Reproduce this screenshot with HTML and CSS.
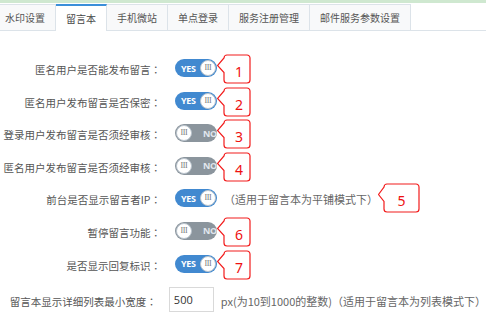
FILE: index.html
```html
<!DOCTYPE html>
<html>
<head>
  <title>留言本设置</title>
  <link rel="stylesheet" href="styles.css">
</head>
<body>
  <div class="topline"></div>

  <ul class="tabs">
    <li class="tab">水印设置</li>
    <li class="tab active">留言本</li>
    <li class="tab">手机微站</li>
    <li class="tab">单点登录</li>
    <li class="tab">服务注册管理</li>
    <li class="tab">邮件服务参数设置</li>
  </ul>

  <div class="form">
    <div class="row">
      <label class="label">匿名用户是否能发布留言<span class="colon">：</span></label>
      <div class="ctl">
        <span class="switch on"><span class="switch-text">YES</span><span class="knob">III</span></span>
        <span class="callout">
          <svg width="38" height="31" viewBox="0 0 38 31"><path d="M7 18.5V26a3 3 0 0 0 3 3h20a3 3 0 0 0 3-3V4a3 3 0 0 0-3-3H10a3 3 0 0 0-3 3L0.5 11.5Z"/></svg>
          <span class="callout-num">1</span>
        </span>
      </div>
    </div>

    <div class="row">
      <label class="label">匿名用户发布留言是否保密<span class="colon">：</span></label>
      <div class="ctl">
        <span class="switch on"><span class="switch-text">YES</span><span class="knob">III</span></span>
        <span class="callout">
          <svg width="38" height="31" viewBox="0 0 38 31"><path d="M7 18.5V26a3 3 0 0 0 3 3h20a3 3 0 0 0 3-3V4a3 3 0 0 0-3-3H10a3 3 0 0 0-3 3L0.5 11.5Z"/></svg>
          <span class="callout-num">2</span>
        </span>
      </div>
    </div>

    <div class="row">
      <label class="label">登录用户发布留言是否须经审核<span class="colon">：</span></label>
      <div class="ctl">
        <span class="switch off"><span class="knob">III</span><span class="switch-text">NO</span></span>
        <span class="callout">
          <svg width="38" height="31" viewBox="0 0 38 31"><path d="M7 18.5V26a3 3 0 0 0 3 3h20a3 3 0 0 0 3-3V4a3 3 0 0 0-3-3H10a3 3 0 0 0-3 3L0.5 11.5Z"/></svg>
          <span class="callout-num">3</span>
        </span>
      </div>
    </div>

    <div class="row">
      <label class="label">匿名用户发布留言是否须经审核<span class="colon">：</span></label>
      <div class="ctl">
        <span class="switch off"><span class="knob">III</span><span class="switch-text">NO</span></span>
        <span class="callout">
          <svg width="38" height="31" viewBox="0 0 38 31"><path d="M7 18.5V26a3 3 0 0 0 3 3h20a3 3 0 0 0 3-3V4a3 3 0 0 0-3-3H10a3 3 0 0 0-3 3L0.5 11.5Z"/></svg>
          <span class="callout-num">4</span>
        </span>
      </div>
    </div>

    <div class="row">
      <label class="label">前台是否显示留言者IP<span class="colon">：</span></label>
      <div class="ctl">
        <span class="switch on"><span class="switch-text">YES</span><span class="knob">III</span></span>
      </div>
      <div class="ctl note">
        （适用于留言本为平铺模式下）
        <span class="callout wide">
          <svg width="44" height="31" viewBox="0 0 44 31"><path d="M6 18.5V26a3 3 0 0 0 3 3h29a3 3 0 0 0 3-3V4a3 3 0 0 0-3-3H9a3 3 0 0 0-3 3L0.5 11.5Z"/></svg>
          <span class="callout-num">5</span>
        </span>
      </div>
    </div>

    <div class="row">
      <label class="label">暂停留言功能<span class="colon">：</span></label>
      <div class="ctl">
        <span class="switch off"><span class="knob">III</span><span class="switch-text">NO</span></span>
        <span class="callout">
          <svg width="38" height="31" viewBox="0 0 38 31"><path d="M7 18.5V26a3 3 0 0 0 3 3h20a3 3 0 0 0 3-3V4a3 3 0 0 0-3-3H10a3 3 0 0 0-3 3L0.5 11.5Z"/></svg>
          <span class="callout-num">6</span>
        </span>
      </div>
    </div>

    <div class="row">
      <label class="label">是否显示回复标识<span class="colon">：</span></label>
      <div class="ctl">
        <span class="switch on"><span class="switch-text">YES</span><span class="knob">III</span></span>
        <span class="callout">
          <svg width="38" height="31" viewBox="0 0 38 31"><path d="M7 18.5V26a3 3 0 0 0 3 3h20a3 3 0 0 0 3-3V4a3 3 0 0 0-3-3H10a3 3 0 0 0-3 3L0.5 11.5Z"/></svg>
          <span class="callout-num">7</span>
        </span>
      </div>
    </div>

    <div class="row row-input">
      <label class="label">留言本显示详细列表最小宽度<span class="colon">：</span></label>
      <input type="text" class="width-input" value="500">
      <span class="note">px(为10到1000的整数)（适用于留言本为列表模式下）</span>
    </div>
  </div>
</body>
</html>
```

FILE: styles.css
```css
body {
  margin: 0;
  font-family: "Noto Sans CJK SC", sans-serif;
  font-size: 10px;
  color: #555;
  background: #fff;
  overflow: hidden;
}

.topline {
  height: 3px;
  background: #cfe8d0;
}

/* tabs */
.tabs {
  display: flex;
  align-items: flex-start;
  height: 26px;
  margin: 1px 0 0 -5px;
  padding: 0;
  list-style: none;
  border-bottom: 1px solid #dce3e9;
}

.tab {
  height: 25px;
  line-height: 25px;
  padding: 0 10px;
  border-top: 1px solid #dce3e9;
  border-right: 1px solid #dce3e9;
  background: #f8f9fa;
  color: #555;
  white-space: nowrap;
}

.tab.active {
  border-top: 2px solid #3b8fd9;
  background: #fff;
  color: #444;
  margin-bottom: -1px;
}

/* form rows */
.form {
  display: flex;
  flex-direction: column;
  gap: 14.6px;
  padding-top: 28px;
}

.row {
  display: flex;
  align-items: center;
  height: 18px;
}

.row-input {
  height: 25px;
}

.label {
  width: 161px;
  margin-right: 14px;
  padding-top: 3px;
  text-align: right;
  white-space: nowrap;
  font-size: 10.5px;
  color: #555;
}

.colon {
  font-family: "Noto Sans CJK JP", sans-serif;
}

.ctl {
  position: relative;
  display: flex;
  align-items: center;
  height: 18px;
}

/* switch */
.switch {
  display: flex;
  align-items: center;
  box-sizing: border-box;
  width: 42px;
  height: 18px;
  padding: 0 1px;
  border-radius: 9px;
  overflow: hidden;
  font-family: "Open Sans", "Liberation Sans", sans-serif;
  font-weight: bold;
  font-size: 9px;
}

.switch.on {
  background: #4189d0;
  justify-content: space-between;
  padding-left: 6px;
}

.switch.off {
  background: #8b959d;
}

.switch-text {
  color: #fff;
  letter-spacing: -0.3px;
}

.switch.off .switch-text {
  color: #e1e7ee;
  margin-left: 11px;
}

.knob {
  flex: none;
  box-sizing: border-box;
  width: 16px;
  height: 16px;
  border-radius: 50%;
  background: #fff;
  border: 1px solid #b9c3cc;
  font-family: "Liberation Serif", serif;
  font-weight: normal;
  font-size: 8px;
  line-height: 14px;
  text-align: center;
  color: #777;
  letter-spacing: -0.4px;
}

/* red annotation callouts */
.callout {
  position: absolute;
  left: 100%;
  top: -5px;
  width: 38px;
  height: 31px;
}

.callout svg {
  display: block;
}

.callout path {
  fill: none;
  stroke: #f21c1c;
  stroke-width: 1.2;
}

.callout-num {
  position: absolute;
  left: 9px;
  right: 3px;
  top: 10px;
  line-height: 16px;
  text-align: center;
  font-family: "Noto Sans", sans-serif;
  font-size: 14px;
  color: #ee1111;
}

.callout.wide {
  width: 44px;
}

.callout.wide .callout-num {
  left: 6px;
}

/* notes and input */
.note {
  margin-left: 7px;
  font-size: 11px;
  color: #666;
  white-space: nowrap;
  padding-top: 2px;
}

.width-input {
  box-sizing: border-box;
  width: 45px;
  height: 25px;
  margin: 0 0 0 -2px;
  padding: 0 4px;
  border: 1px solid #d9d9d9;
  font-family: "Open Sans", "Liberation Sans", sans-serif;
  font-size: 11px;
  color: #333;
  outline: none;
}
```
